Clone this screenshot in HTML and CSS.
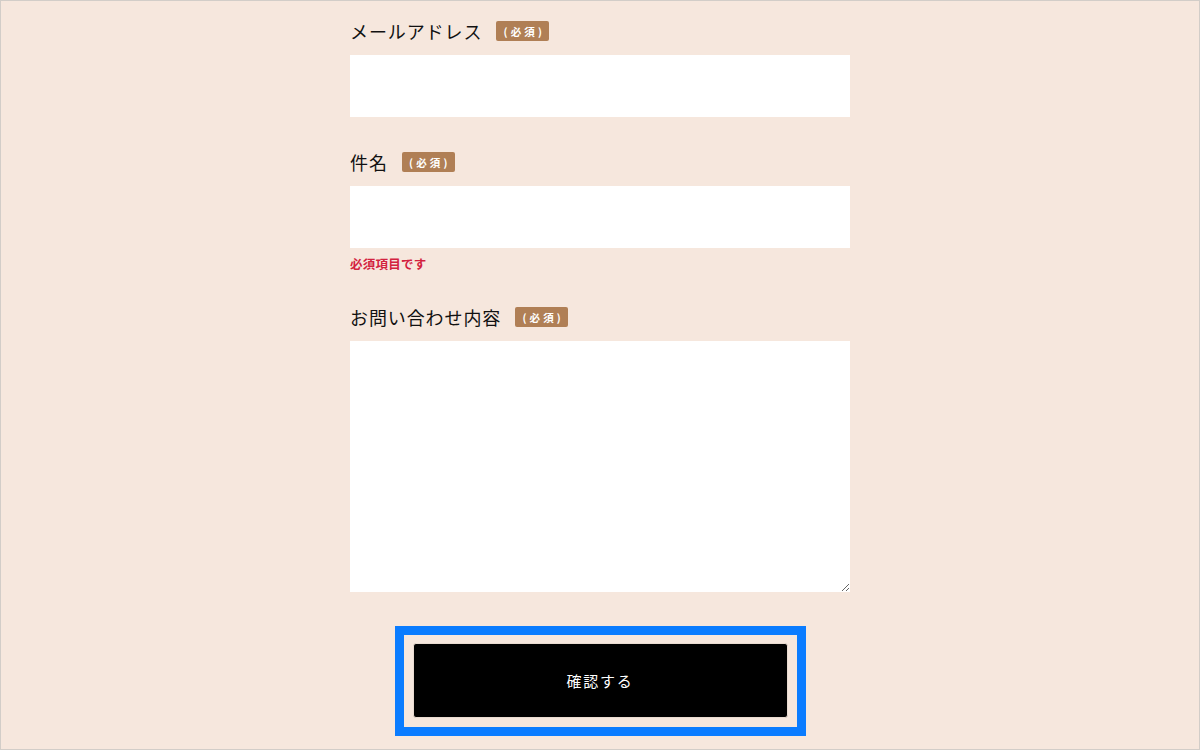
FILE: index.html
```html
<!DOCTYPE html>
<html lang="ja">
<head>
<meta charset="utf-8">
<title>お問い合わせ</title>
<link rel="stylesheet" href="styles.css">
</head>
<body>
<div class="frame">
  <form class="form">
    <div class="field">
      <div class="label-row"><span class="label">メールアドレス</span><span class="badge">(必須)</span></div>
      <input class="input" type="text">
    </div>
    <div class="field">
      <div class="label-row"><span class="label">件名</span><span class="badge">(必須)</span></div>
      <input class="input" type="text">
      <p class="error">必須項目です</p>
    </div>
    <div class="field field-last">
      <div class="label-row"><span class="label">お問い合わせ内容</span><span class="badge">(必須)</span></div>
      <textarea class="textarea"></textarea>
    </div>
    <div class="actions">
      <div class="focus-ring">
        <button type="button" class="submit">確認する</button>
      </div>
    </div>
  </form>
</div>
</body>
</html>
```

FILE: styles.css
```css
* { box-sizing: border-box; }
html, body { margin: 0; padding: 0; }
body {
  font-family: "Noto Sans CJK JP", "Noto Sans", sans-serif;
  color: #111;
}
.frame {
  width: 1200px;
  height: 750px;
  border: 1px solid #d2cdc8;
  background: #f6e7dd;
  overflow: hidden;
  padding-top: 20px;
}
.form {
  width: 500px;
  margin: 0 auto;
  display: flex;
  flex-direction: column;
}
.field {
  display: flex;
  flex-direction: column;
  margin-bottom: 35px;
}
.field-last { margin-bottom: 34px; }
.label-row {
  display: flex;
  align-items: center;
  height: 20px;
  margin-bottom: 14px;
}
.label {
  font-size: 18px;
  letter-spacing: 0.05em;
  line-height: 20px;
}
.badge {
  margin-left: 14px;
  width: 53px;
  height: 20px;
  border-radius: 2px;
  background: #b07f55;
  color: #fff;
  font-size: 10.5px;
  font-weight: 700;
  letter-spacing: 0.3em;
  display: flex;
  align-items: center;
  justify-content: center;
  padding-left: 3px;
}
.input {
  display: block;
  width: 500px;
  height: 62px;
  border: none;
  background: #fff;
  outline: none;
  padding: 0 12px;
  font-size: 16px;
}
.textarea {
  display: block;
  width: 500px;
  height: 251px;
  border: none;
  background: #fff;
  outline: none;
  resize: vertical;
  padding: 12px;
  font-size: 16px;
  font-family: inherit;
  margin: 0;
}
.error {
  margin: 8px 0 0;
  color: #d3223f;
  font-size: 12.5px;
  font-weight: 700;
  letter-spacing: 0.02em;
  line-height: 16px;
}
.actions {
  display: flex;
  justify-content: center;
}
.focus-ring {
  border: 9px solid #0a7cff;
  padding: 8px 9px 9px 9px;
  display: flex;
}
.submit {
  width: 375px;
  height: 75px;
  background: #000;
  color: #fff;
  border: 1px solid #e9dbd0;
  border-radius: 3px;
  font-family: inherit;
  font-size: 15px;
  letter-spacing: 0.12em;
  outline: none;
  cursor: pointer;
}
```
